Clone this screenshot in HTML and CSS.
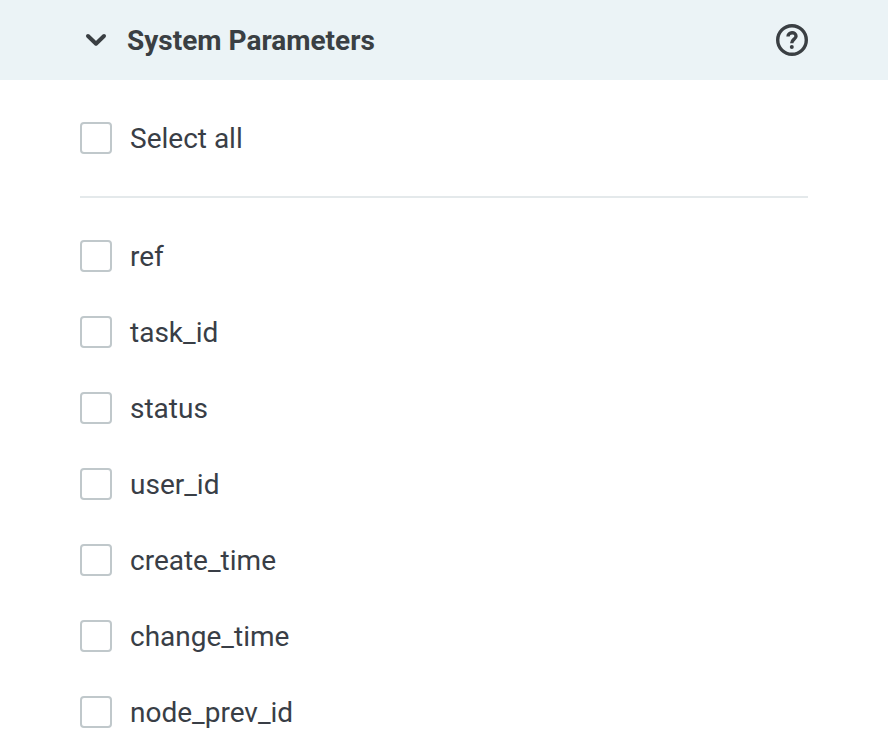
FILE: index.html
```html
<!DOCTYPE html>
<html lang="en">
<head>
<meta charset="utf-8">
<title>System Parameters</title>
<link rel="stylesheet" href="styles.css">
</head>
<body>
<header class="header">
  <svg class="chevron" width="32" height="32" viewBox="0 0 32 32"><path d="M8 12 L16 19.7 L24 12"/></svg>
  <h1 class="title">System Parameters</h1>
  <svg class="help" width="32" height="32" viewBox="0 0 32 32"><circle cx="16" cy="16" r="14.3"/><path d="M12 12.6 C12 7.6 20 7.3 20 12.2 C20 15.2 15.7 15.2 15.7 19.3"/><circle class="dot" cx="15.8" cy="23" r="2"/></svg>
</header>
<main class="panel">
  <label class="row"><input class="box" type="checkbox"><span class="label">Select all</span></label>
  <div class="list">
    <label class="row"><input class="box" type="checkbox"><span class="label">ref</span></label>
    <label class="row"><input class="box" type="checkbox"><span class="label">task_id</span></label>
    <label class="row"><input class="box" type="checkbox"><span class="label">status</span></label>
    <label class="row"><input class="box" type="checkbox"><span class="label">user_id</span></label>
    <label class="row"><input class="box" type="checkbox"><span class="label">create_time</span></label>
    <label class="row"><input class="box" type="checkbox"><span class="label">change_time</span></label>
    <label class="row"><input class="box" type="checkbox"><span class="label">node_prev_id</span></label>
  </div>
</main>
</body>
</html>
```
FILE: styles.css
```css
* { box-sizing: border-box; }
body {
  margin: 0;
  background: #fff;
  color: #393e46;
  font-family: Roboto, sans-serif;
  font-size: 28px;
}
.header {
  display: flex;
  align-items: center;
  height: 80px;
  padding: 0 80px;
  background: #ebf3f6;
  color: #3a3f43;
}
.title {
  flex: 1;
  margin: 0 0 0 15px;
  padding-top: 2px;
  font-size: 28px;
  line-height: 32px;
  font-weight: 700;
}
.chevron, .help { fill: none; stroke: currentColor; }
.chevron { stroke-width: 4; stroke-linecap: round; stroke-linejoin: round; }
.help { stroke-width: 3.4; }
.dot { fill: currentColor; stroke: none; }
.panel { padding: 42px 80px 0; }
.row { display: flex; align-items: center; gap: 18px; height: 32px; }
.list {
  display: grid;
  gap: 44px;
  margin-top: 42px;
  padding-top: 42px;
  border-top: 2px solid #e4e9eb;
}
.box {
  appearance: none;
  flex: none;
  width: 32px;
  height: 32px;
  margin: 0;
  border: 2px solid #c0c8cb;
  border-radius: 4px;
  background: #fff;
}
.label { padding-top: 2px; line-height: 32px; }
```
